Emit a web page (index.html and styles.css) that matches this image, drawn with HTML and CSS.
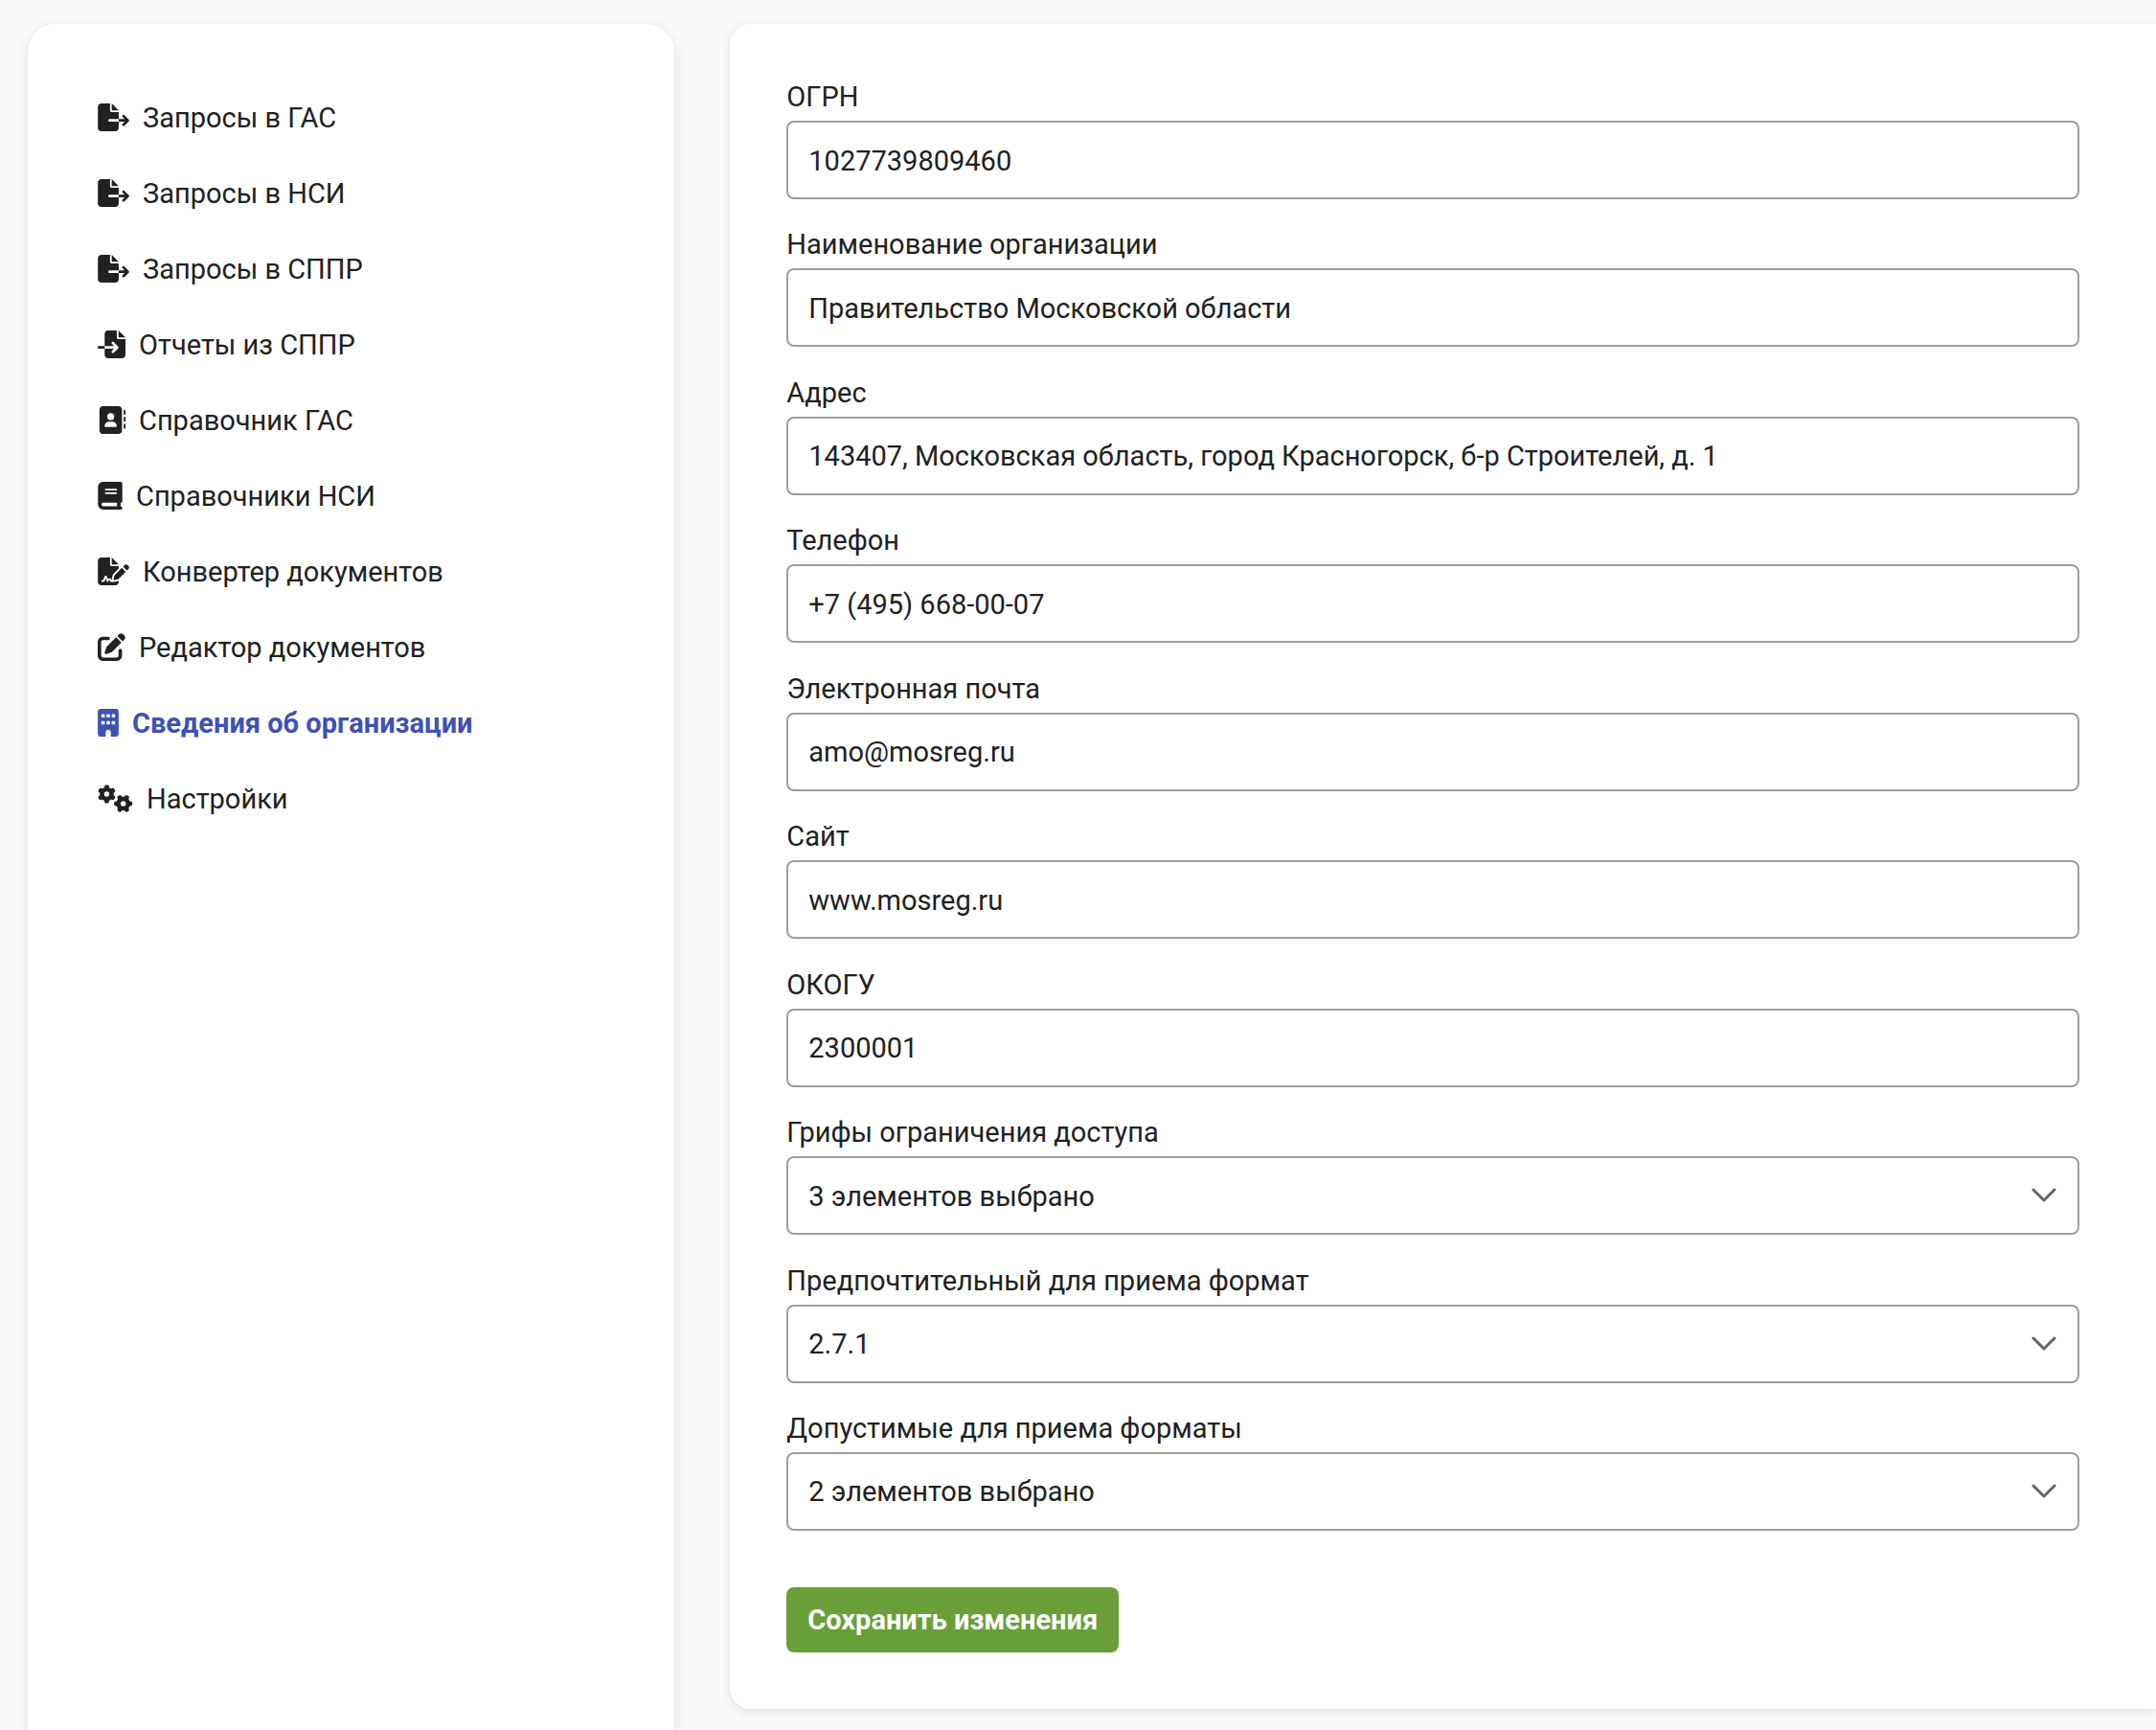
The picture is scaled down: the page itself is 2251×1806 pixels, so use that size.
FILE: index.html
```html
<!DOCTYPE html>
<html lang="ru">
<head>
<meta charset="utf-8">
<meta name="viewport" content="width=device-width, initial-scale=1">
<title>Сведения об организации</title>
<link rel="stylesheet" href="styles.css">
</head>
<body>
<div class="layout">
  <nav class="sidebar" aria-label="Разделы">
    <ul class="menu">
      <li><a class="menu-link" href="#gas"><svg class="icon" viewBox="0 0 576 512" width="33" height="29" aria-hidden="true"><path d="M0 64C0 28.7 28.7 0 64 0H224V128c0 17.7 14.3 32 32 32H384V288H216c-13.3 0-24 10.7-24 24s10.7 24 24 24H384V448c0 35.3-28.7 64-64 64H64c-35.3 0-64-28.7-64-64V64zM384 336V288H494.1l-39-39c-9.4-9.4-9.4-24.6 0-33.9s24.6-9.4 33.9 0l80 80c9.4 9.4 9.4 24.6 0 33.9l-80 80c-9.4 9.4-24.6 9.4-33.9 0s-9.4-24.6 0-33.9l39-39H384zm0-208H256V0L384 128z"/></svg>Запросы в ГАС</a></li>
      <li><a class="menu-link" href="#nsi"><svg class="icon" viewBox="0 0 576 512" width="33" height="29" aria-hidden="true"><path d="M0 64C0 28.7 28.7 0 64 0H224V128c0 17.7 14.3 32 32 32H384V288H216c-13.3 0-24 10.7-24 24s10.7 24 24 24H384V448c0 35.3-28.7 64-64 64H64c-35.3 0-64-28.7-64-64V64zM384 336V288H494.1l-39-39c-9.4-9.4-9.4-24.6 0-33.9s24.6-9.4 33.9 0l80 80c9.4 9.4 9.4 24.6 0 33.9l-80 80c-9.4 9.4-24.6 9.4-33.9 0s-9.4-24.6 0-33.9l39-39H384zm0-208H256V0L384 128z"/></svg>Запросы в НСИ</a></li>
      <li><a class="menu-link" href="#sppr"><svg class="icon" viewBox="0 0 576 512" width="33" height="29" aria-hidden="true"><path d="M0 64C0 28.7 28.7 0 64 0H224V128c0 17.7 14.3 32 32 32H384V288H216c-13.3 0-24 10.7-24 24s10.7 24 24 24H384V448c0 35.3-28.7 64-64 64H64c-35.3 0-64-28.7-64-64V64zM384 336V288H494.1l-39-39c-9.4-9.4-9.4-24.6 0-33.9s24.6-9.4 33.9 0l80 80c9.4 9.4 9.4 24.6 0 33.9l-80 80c-9.4 9.4-24.6 9.4-33.9 0s-9.4-24.6 0-33.9l39-39H384zm0-208H256V0L384 128z"/></svg>Запросы в СППР</a></li>
      <li><a class="menu-link" href="#reports"><svg class="icon" viewBox="0 0 512 512" width="29" height="29" aria-hidden="true"><path d="M128 64c0-35.3 28.7-64 64-64H352V128c0 17.7 14.3 32 32 32H512V448c0 35.3-28.7 64-64 64H192c-35.3 0-64-28.7-64-64V336H302.1l-39 39c-9.4 9.4-9.4 24.6 0 33.9s24.6 9.4 33.9 0l80-80c9.4-9.4 9.4-24.6 0-33.9l-80-80c-9.4-9.4-24.6-9.4-33.9 0s-9.4 24.6 0 33.9l39 39H128V64zm0 224v48H24c-13.3 0-24-10.7-24-24s10.7-24 24-24H128zM512 128H384V0L512 128z"/></svg>Отчеты из СППР</a></li>
      <li><a class="menu-link" href="#gas-directory"><svg class="icon" viewBox="0 0 512 512" width="29" height="29" aria-hidden="true"><path d="M96 0C60.7 0 32 28.7 32 64V448c0 35.3 28.7 64 64 64H384c35.3 0 64-28.7 64-64V64c0-35.3-28.7-64-64-64H96zM208 288h64c44.2 0 80 35.8 80 80c0 8.8-7.2 16-16 16H144c-8.8 0-16-7.2-16-16c0-44.2 35.8-80 80-80zm-32-96a64 64 0 1 1 128 0 64 64 0 1 1 -128 0zM512 80c0-8.8-7.2-16-16-16s-16 7.2-16 16v64c0 8.8 7.2 16 16 16s16-7.2 16-16V80zM496 192c-8.8 0-16 7.2-16 16v64c0 8.8 7.2 16 16 16s16-7.2 16-16V208c0-8.8-7.2-16-16-16zm16 144c0-8.8-7.2-16-16-16s-16 7.2-16 16v64c0 8.8 7.2 16 16 16s16-7.2 16-16V336z"/></svg>Справочник ГАС</a></li>
      <li><a class="menu-link" href="#nsi-directories"><svg class="icon" viewBox="0 0 448 512" width="26" height="29" aria-hidden="true"><path d="M96 0C43 0 0 43 0 96V416c0 53 43 96 96 96H384h32c17.7 0 32-14.3 32-32s-14.3-32-32-32V384c17.7 0 32-14.3 32-32V32c0-17.7-14.3-32-32-32H384 96zm0 384H352v64H96c-17.7 0-32-14.3-32-32s14.3-32 32-32zm32-240c0-8.8 7.2-16 16-16H336c8.8 0 16 7.2 16 16s-7.2 16-16 16H144c-8.8 0-16-7.2-16-16zm16 48H336c8.8 0 16 7.2 16 16s-7.2 16-16 16H144c-8.8 0-16-7.2-16-16s7.2-16 16-16z"/></svg>Справочники НСИ</a></li>
      <li><a class="menu-link" href="#converter"><svg class="icon" viewBox="0 0 576 512" width="33" height="29" aria-hidden="true"><path d="M64 0C28.7 0 0 28.7 0 64V448c0 35.3 28.7 64 64 64H320c35.3 0 64-28.7 64-64V428.7c-2.7 1.1-5.4 2-8.2 2.7l-60.1 15c-3 .7-6 1.2-9 1.4c-.9 .1-1.8 .2-2.7 .2H240c-6.1 0-11.6-3.4-14.3-8.8l-8.8-17.7c-1.7-3.4-5.1-5.5-8.8-5.5s-7.2 2.1-8.8 5.5l-8.8 17.7c-2.9 5.9-9.2 9.4-15.7 8.8s-12.1-5.1-13.9-11.3L144 381l-9.8 32.8c-6.1 20.3-24.8 34.2-46 34.2H80c-8.8 0-16-7.2-16-16s7.2-16 16-16h8.2c7.1 0 13.3-4.6 15.3-11.4l14.9-49.5c3.4-11.3 13.8-19.1 25.6-19.1s22.2 7.7 25.6 19.1l11.6 38.6c7.4-6.2 16.8-9.7 26.8-9.7c15.9 0 30.4 9 37.5 23.2l4.4 8.8h8.9c-3.1-8.8-3.7-18.4-1.4-27.8l15-60.1c2.8-11.3 8.6-21.5 16.8-29.7L384 203.6V160H256c-17.7 0-32-14.3-32-32V0H64zM256 0V128H384L256 0zM549.8 139.7c-15.6-15.6-40.9-15.6-56.6 0l-29.4 29.4 71 71 29.4-29.4c15.6-15.6 15.6-40.9 0-56.6l-14.4-14.4zM311.9 321c-4.1 4.1-7 9.2-8.4 14.9l-15 60.1c-1.4 5.5 .2 11.2 4.2 15.2s9.7 5.6 15.2 4.2l60.1-15c5.6-1.4 10.8-4.3 14.9-8.4L512.1 262.7l-71-71L311.9 321z"/></svg>Конвертер документов</a></li>
      <li><a class="menu-link" href="#editor"><svg class="icon" viewBox="0 0 512 512" width="29" height="29" aria-hidden="true"><path d="M471.6 21.7c-21.9-21.9-57.3-21.9-79.2 0L362.3 51.7l97.9 97.9 30.1-30.1c21.9-21.9 21.9-57.3 0-79.2L471.6 21.7zm-299.2 220c-6.1 6.1-10.8 13.6-13.5 21.9l-29.6 88.8c-2.9 8.6-.6 18.1 5.8 24.6s15.9 8.7 24.6 5.8l88.8-29.6c8.2-2.7 15.7-7.4 21.9-13.5L437.7 172.3 339.7 74.3 172.4 241.7zM96 64C43 64 0 107 0 160V416c0 53 43 96 96 96H352c53 0 96-43 96-96V320c0-17.7-14.3-32-32-32s-32 14.3-32 32v96c0 17.7-14.3 32-32 32H96c-17.7 0-32-14.3-32-32V160c0-17.7 14.3-32 32-32h96c17.7 0 32-14.3 32-32s-14.3-32-32-32H96z"/></svg>Редактор документов</a></li>
      <li><a class="menu-link menu-link-active" href="#organization" aria-current="page"><svg class="icon" viewBox="0 0 384 512" width="22" height="29" aria-hidden="true"><path d="M48 0C21.5 0 0 21.5 0 48V464c0 26.5 21.5 48 48 48h96V432c0-26.5 21.5-48 48-48s48 21.5 48 48v80h96c26.5 0 48-21.5 48-48V48c0-26.5-21.5-48-48-48H48zM64 240c0-8.8 7.2-16 16-16h32c8.8 0 16 7.2 16 16v32c0 8.8-7.2 16-16 16H80c-8.8 0-16-7.2-16-16V240zm112-16h32c8.8 0 16 7.2 16 16v32c0 8.8-7.2 16-16 16H176c-8.8 0-16-7.2-16-16V240c0-8.8 7.2-16 16-16zm80 16c0-8.8 7.2-16 16-16h32c8.8 0 16 7.2 16 16v32c0 8.8-7.2 16-16 16H272c-8.8 0-16-7.2-16-16V240zM80 96h32c8.8 0 16 7.2 16 16v32c0 8.8-7.2 16-16 16H80c-8.8 0-16-7.2-16-16V112c0-8.8 7.2-16 16-16zm80 16c0-8.8 7.2-16 16-16h32c8.8 0 16 7.2 16 16v32c0 8.8-7.2 16-16 16H176c-8.8 0-16-7.2-16-16V112zM272 96h32c8.8 0 16 7.2 16 16v32c0 8.8-7.2 16-16 16H272c-8.8 0-16-7.2-16-16V112c0-8.8 7.2-16 16-16z"/></svg>Сведения об организации</a></li>
      <li><a class="menu-link" href="#settings"><svg class="icon" viewBox="0 0 640 512" width="37" height="29" aria-hidden="true"><path d="M308.5 135.3c7.1-6.3 9.9-16.2 6.2-25c-2.3-5.3-4.8-10.5-7.6-15.5L304 89.4c-3-5-6.3-9.9-9.8-14.6c-5.7-7.6-15.7-10.1-24.7-7.1l-28.2 9.3c-10.7-8.8-23-16-36.2-20.9L199 27.1c-1.9-9.3-9.1-16.7-18.5-17.8C173.9 8.4 167.2 8 160.4 8h-.7c-6.8 0-13.5 .4-20.1 1.2c-9.4 1.1-16.6 8.6-18.5 17.8L115 56.1c-13.3 5-25.5 12.1-36.2 20.9L50.5 67.8c-9-3-19-.5-24.7 7.1c-3.5 4.7-6.8 9.6-9.9 14.6l-3 5.3c-2.8 5-5.3 10.2-7.6 15.6c-3.7 8.7-.9 18.6 6.2 25l22.2 19.8C32.6 161.9 32 168.9 32 176s.6 14.1 1.7 20.9L11.5 216.7c-7.1 6.3-9.9 16.2-6.2 25c2.3 5.3 4.8 10.5 7.6 15.6l3 5.2c3 5.1 6.3 9.9 9.9 14.6c5.7 7.6 15.7 10.1 24.7 7.1l28.2-9.3c10.7 8.8 23 16 36.2 20.9l6.1 29.1c1.9 9.3 9.1 16.7 18.5 17.8c6.7 .8 13.5 1.2 20.4 1.2s13.7-.4 20.4-1.2c9.4-1.1 16.6-8.6 18.5-17.8l6.1-29.1c13.3-5 25.5-12.1 36.2-20.9l28.2 9.3c9 3 19 .5 24.7-7.1c3.5-4.7 6.8-9.5 9.8-14.6l3.1-5.4c2.8-5 5.3-10.2 7.6-15.5c3.7-8.7 .9-18.6-6.2-25l-22.2-19.8c1.1-6.8 1.7-13.8 1.7-20.9s-.6-14.1-1.7-20.9l22.2-19.8zM112 176a48 48 0 1 1 96 0 48 48 0 1 1 -96 0zM504.7 500.5c6.3 7.1 16.2 9.9 25 6.2c5.3-2.3 10.5-4.8 15.5-7.6l5.4-3.1c5-3 9.9-6.3 14.6-9.8c7.6-5.7 10.1-15.7 7.1-24.7l-9.3-28.2c8.8-10.7 16-23 20.9-36.2l29.1-6.1c9.3-1.9 16.7-9.1 17.8-18.5c.8-6.7 1.2-13.5 1.2-20.4s-.4-13.7-1.2-20.4c-1.1-9.4-8.6-16.6-17.8-18.5L583.9 307c-5-13.3-12.1-25.5-20.9-36.2l9.3-28.2c3-9 .5-19-7.1-24.7c-4.7-3.5-9.6-6.8-14.6-9.9l-5.3-3c-5-2.8-10.2-5.3-15.6-7.6c-8.7-3.7-18.6-.9-25 6.2l-19.8 22.2c-6.8-1.1-13.8-1.7-20.9-1.7s-14.1 .6-20.9 1.7l-19.8-22.2c-6.3-7.1-16.2-9.9-25-6.2c-5.3 2.3-10.5 4.8-15.6 7.6l-5.2 3c-5.1 3-9.9 6.3-14.6 9.9c-7.6 5.7-10.1 15.7-7.1 24.7l9.3 28.2c-8.8 10.7-16 23-20.9 36.2L315.1 313c-9.3 1.9-16.7 9.1-17.8 18.5c-.8 6.7-1.2 13.5-1.2 20.4s.4 13.7 1.2 20.4c1.1 9.4 8.6 16.6 17.8 18.5l29.1 6.1c5 13.3 12.1 25.5 20.9 36.2l-9.3 28.2c-3 9-.5 19 7.1 24.7c4.7 3.5 9.5 6.8 14.6 9.8l5.4 3.1c5 2.8 10.2 5.3 15.5 7.6c8.7 3.7 18.6 .9 25-6.2l19.8-22.2c6.8 1.1 13.8 1.7 20.9 1.7s14.1-.6 20.9-1.7l19.8 22.2zM464 304a48 48 0 1 1 0 96 48 48 0 1 1 0-96z"/></svg>Настройки</a></li>
    </ul>
  </nav>

  <main class="content">
    <form class="org-form">
      <div class="fields">
        <div class="field">
          <label class="label" for="ogrn">ОГРН</label>
          <input class="control" id="ogrn" type="text" value="1027739809460">
        </div>
        <div class="field">
          <label class="label" for="name">Наименование организации</label>
          <input class="control" id="name" type="text" value="Правительство Московской области">
        </div>
        <div class="field">
          <label class="label" for="address">Адрес</label>
          <input class="control" id="address" type="text" value="143407, Московская область, город Красногорск, б-р Строителей, д. 1">
        </div>
        <div class="field">
          <label class="label" for="phone">Телефон</label>
          <input class="control" id="phone" type="tel" value="+7 (495) 668-00-07">
        </div>
        <div class="field">
          <label class="label" for="email">Электронная почта</label>
          <input class="control" id="email" type="email" value="amo@mosreg.ru">
        </div>
        <div class="field">
          <label class="label" for="site">Сайт</label>
          <input class="control" id="site" type="text" value="www.mosreg.ru">
        </div>
        <div class="field">
          <label class="label" for="okogu">ОКОГУ</label>
          <input class="control" id="okogu" type="text" value="2300001">
        </div>
        <div class="field">
          <label class="label" for="access">Грифы ограничения доступа</label>
          <div class="dropdown">
            <select class="control" id="access"><option>3 элементов выбрано</option></select>
            <svg class="chevron" viewBox="0 0 26 16" width="26" height="16" aria-hidden="true"><path d="M2 2 13 13 24 2"/></svg>
          </div>
        </div>
        <div class="field">
          <label class="label" for="preferred">Предпочтительный для приема формат</label>
          <div class="dropdown">
            <select class="control" id="preferred"><option>2.7.1</option></select>
            <svg class="chevron" viewBox="0 0 26 16" width="26" height="16" aria-hidden="true"><path d="M2 2 13 13 24 2"/></svg>
          </div>
        </div>
        <div class="field">
          <label class="label" for="allowed">Допустимые для приема форматы</label>
          <div class="dropdown">
            <select class="control" id="allowed"><option>2 элементов выбрано</option></select>
            <svg class="chevron" viewBox="0 0 26 16" width="26" height="16" aria-hidden="true"><path d="M2 2 13 13 24 2"/></svg>
          </div>
        </div>
      </div>
      <button class="save" type="submit">Сохранить изменения</button>
    </form>
  </main>
</div>
</body>
</html>
```
FILE: styles.css
```css
* {
  box-sizing: border-box;
}

body {
  margin: 0;
  background: #fafafa;
  color: #212121;
  font: 400 29px/36px Roboto, "Liberation Sans", sans-serif;
}

.layout {
  display: flex;
  gap: 58px;
  min-height: 100vh;
  padding: 25px 0 0 29px;
}

.sidebar,
.content {
  background: #fff;
  box-shadow: 0 3px 12px rgba(0, 0, 0, 0.12);
}

.sidebar {
  flex: none;
  width: 30vw;
  padding: 58px 73px;
  border-radius: 29px 29px 0 0;
}

.menu {
  margin: 0;
  padding: 0;
  list-style: none;
}

.menu-link {
  display: flex;
  align-items: center;
  gap: 14px;
  height: 79px;
  color: inherit;
  text-decoration: none;
}

.menu-link-active {
  color: #3f51b5;
  font-weight: 700;
}

.icon {
  flex: none;
  fill: currentColor;
}

.content {
  display: flex;
  flex: 1;
  min-width: 0;
  margin-bottom: 22px;
  padding: 58px 80px 59px 59px;
  border-radius: 22px 0 0 22px;
}

.org-form {
  display: flex;
  flex: 1;
  flex-direction: column;
  align-items: flex-start;
  gap: 59px;
  min-width: 0;
}

.fields {
  display: flex;
  flex: 1;
  flex-direction: column;
  justify-content: space-between;
  gap: 28px;
  width: 100%;
}

.field {
  display: flex;
  flex-direction: column;
  gap: 7px;
}

.control {
  width: 100%;
  height: 82px;
  margin: 0;
  padding: 1px 21px 0;
  border: 2px solid #9e9e9e;
  border-radius: 8px;
  background: #fff;
  color: inherit;
  font: inherit;
  appearance: none;
}

.dropdown {
  display: grid;
  align-items: center;
}

.dropdown > * {
  grid-area: 1 / 1;
}

.chevron {
  justify-self: end;
  margin-right: 24px;
  fill: none;
  stroke: #666;
  stroke-width: 3;
  stroke-linecap: round;
  stroke-linejoin: round;
  pointer-events: none;
}

.save {
  height: 68px;
  padding: 0 22px;
  border: 0;
  border-radius: 8px;
  background: #689f38;
  color: #fff;
  font: inherit;
  font-weight: 700;
}
```
